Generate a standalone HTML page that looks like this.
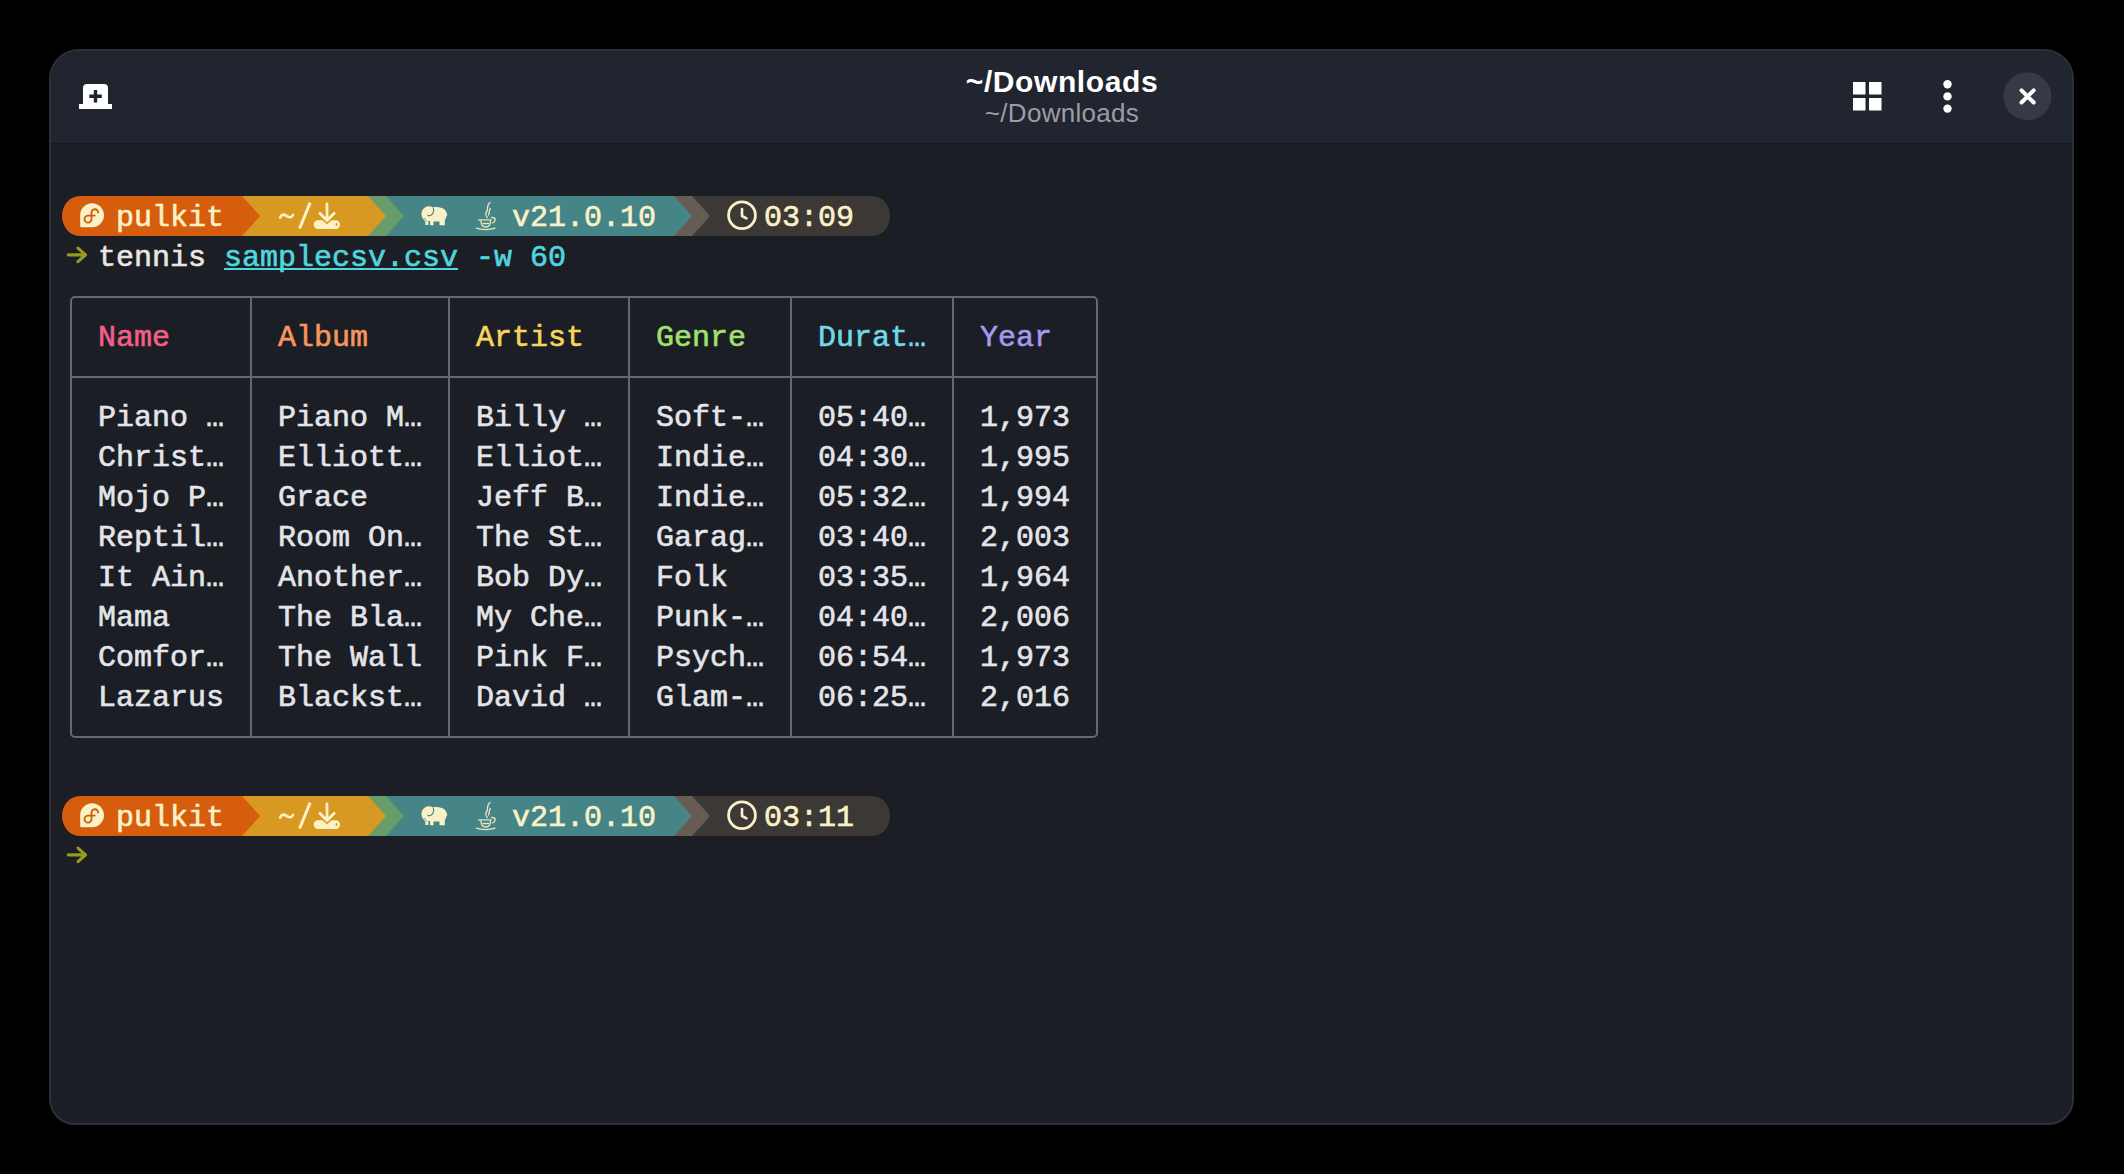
<!DOCTYPE html>
<html><head><meta charset="utf-8">
<style>
html,body{margin:0;padding:0;background:#000;width:2124px;height:1174px;overflow:hidden;}
.win{position:absolute;left:49px;top:49px;width:2021px;height:1072px;border:2px solid #2e3039;border-radius:30px 30px 26px 26px;background:#1b1e25;overflow:hidden;}
.hdr{position:absolute;left:0;top:0;width:2022px;height:92px;background:#21252f;border-bottom:1px solid #17191f;}
.t1{position:absolute;left:0;width:2124px;text-align:center;font-family:"Liberation Sans",sans-serif;}
.term{position:absolute;left:0;top:0;width:2124px;height:1174px;font-family:"Liberation Mono",monospace;font-size:30px;}
.ln{position:absolute;left:62px;height:40px;line-height:40px;white-space:pre;color:#ebe6e2;-webkit-text-stroke:0.6px currentColor;}
.ln .c{position:absolute;top:2px;white-space:pre;}
.dat{color:#e4e5ea;}
.pill{position:absolute;left:62px;}
.arr{position:absolute;left:66px;}
.ico{position:absolute;}
.tbl{position:absolute;left:0;top:0;}
.hi{position:absolute;}
</style></head><body>
<div class="win">
  <div class="hdr"></div>
</div>
<svg class="hi" style="left:79px;top:83px" width="34" height="27" viewBox="0 0 34 27">
<path fill="#fff" d="M8,1 H25 A4,4 0 0 1 29,5 V21 H33 V26 H0 V21 H4 V5 A4,4 0 0 1 8,1 Z"/>
<path fill="none" stroke="#21252f" stroke-width="3.4" d="M16.5,7 V19.5 M10.3,13.2 H22.8"/>
</svg>
<svg class="hi" style="left:1853px;top:82px" width="29" height="29" viewBox="0 0 29 29">
<g fill="#fff"><rect x="0" y="0" width="12.5" height="12.5"/><rect x="16" y="0" width="12.5" height="12.5"/><rect x="0" y="16" width="12.5" height="12.5"/><rect x="16" y="16" width="12.5" height="12.5"/></g>
</svg>
<svg class="hi" style="left:1939px;top:76px" width="18" height="42" viewBox="0 0 18 42">
<g fill="#fff"><circle cx="8.5" cy="8.2" r="4.2"/><circle cx="8.5" cy="20.4" r="4.2"/><circle cx="8.5" cy="32.6" r="4.2"/></g>
</svg>
<svg class="hi" style="left:2003px;top:72px" width="50" height="50" viewBox="0 0 50 50">
<circle cx="24.4" cy="24.2" r="24" fill="#363a45"/>
<path stroke="#fff" stroke-width="4" stroke-linecap="round" d="M18.5,18.3 L30.7,30.5 M30.7,18.3 L18.5,30.5"/>
</svg>
<div class="t1" style="top:65px;font-size:30px;letter-spacing:0.6px;font-weight:bold;color:#fff;">~/Downloads</div>
<div class="t1" style="top:98px;font-size:26px;letter-spacing:0.3px;color:#9b9da4;">~/Downloads</div>

<div class="term">

<svg class="pill" style="top:196px" width="830" height="40" viewBox="0 0 830 40">
<path fill="#3c3836" d="M630,0 H810 A18,20 0 0 1 810,40 H630 Z"/>
<path fill="#665c54" d="M612,0 H630 L648,20 L630,40 H612 Z"/>
<path fill="#458588" d="M306,0 H612 L630,20 L612,40 H306 Z"/>
<path fill="#689d6a" d="M306,0 H324 L342,20 L324,40 H306 Z"/>
<path fill="#d79921" d="M180,0 H306 L324,20 L306,40 H180 Z"/>
<path fill="#d65d0e" d="M18,0 H180 L198,20 L180,40 H18 A18,20 0 0 1 18,0 Z"/>
</svg>
<div class="ln" style="top:196px;color:#fbf1c7"><span class="c" style="left:54px">pulkit</span><span class="c" style="left:450px">v21.0.10</span><span class="c" style="left:702px">03:09</span></div>

<svg class="ico" style="left:276px;top:200px" width="40" height="32" viewBox="0 0 40 32">
<path fill="none" stroke="#fbf1c7" stroke-width="2.7" stroke-linecap="round" d="M4.2,17.6 C5.2,14.6 7.6,14 10,15.6 C12.4,17.2 15.2,18.6 17,15"/>
<path fill="none" stroke="#fbf1c7" stroke-width="3" d="M23.6,28.5 L34.2,2.6"/>
</svg><svg class="ico" style="left:80px;top:203px" width="24" height="25" viewBox="0 0 24 25">
<path fill="#fbf1c7" d="M12,0.2 A12,12 0 1 1 12,24.3 H1.5 A1.3,1.3 0 0 1 0.2,23 V12.2 A12,12 0 0 1 12,0.2 Z"/>
<path fill="none" stroke="#d65d0e" stroke-width="1.9" stroke-linecap="round" d="M14.8,12.6 H8 A3.5,3.5 0 1 0 11.5,16.1 V9.5 A3.3,3.3 0 0 1 18.1,9.5"/>
</svg><svg class="ico" style="left:313px;top:201px" width="28" height="28" viewBox="0 0 28 28">
<path fill="none" stroke="#fbf1c7" stroke-width="2.8" stroke-linecap="round" stroke-linejoin="round" d="M14,2.8 V18.5 M6.8,12.3 L14,19.5 L21.2,12.3"/>
<path fill="#fbf1c7" d="M5,19.2 H9.2 L14,23.2 L18.8,19.2 H22.7 A4.35,4.35 0 0 1 22.7,27.9 H5 A4.35,4.35 0 0 1 5,19.2 Z"/>
<ellipse cx="23.5" cy="23.5" rx="0.9" ry="1.4" fill="#d79921"/>
</svg><svg class="ico" style="left:421px;top:206px" width="27" height="20" viewBox="0 0 27 20">
<path fill="#fbf1c7" d="M4,1.5 C6,0 9,0 11,1 C15,0.8 20,1 23,3 C25,4.5 25.5,6.5 25.8,8 L26.5,8.8 L25.5,10 C25,12 24,13.5 23.8,15 L23.8,19.3 L18.5,19.3 L18.5,15.5 L12.5,15.5 L12.5,19.3 L9,19.3 L9,15 C8.3,14.5 7.8,14.8 7.5,15.3 L7.2,19 L4.5,19 C4.2,17 4.8,15.5 3.2,14 C1.5,12.5 0.5,11 0.5,8 C0.5,5 1.5,3 4,1.5 Z"/>
<path fill="none" stroke="#458588" stroke-width="1.1" d="M12.3,1.3 C13,4 12.5,7.5 10,9.2 C8.5,10 7,9.5 6.5,9"/>
<path fill="none" stroke="#458588" stroke-width="0.9" d="M3,12 C3.5,13 5,13.5 6,15.5"/>
</svg><svg class="ico" style="left:475px;top:201px" width="24" height="30" viewBox="0 0 24 30">
<g fill="none" stroke="#e9e4bd" stroke-width="1.3" stroke-linecap="round">
<path d="M15,1.5 C10.5,5 14,8 11.5,11 C10,13 11,15 12.5,16.5"/>
<path d="M15.5,7.5 C13,9.5 15.5,11 13.5,14"/>
<path d="M3.5,18.8 H16 M6,19.5 C6,24 7.5,26 10.8,26 C14,26 15.5,24 15.5,19.5 M16.5,16.5 C21,16.5 21.5,19.5 17.5,22"/>
<path d="M8,22.5 H13.5"/>
<path d="M1.5,27.2 C6,29 15,29 20,27.2"/>
</g></svg><svg class="ico" style="left:727px;top:200px" width="30" height="31" viewBox="0 0 30 31">
<circle cx="15" cy="15.3" r="13.4" fill="none" stroke="#fbf1c7" stroke-width="2.8"/>
<path fill="none" stroke="#fbf1c7" stroke-width="2.6" stroke-linecap="round" stroke-linejoin="round" d="M15,9 V16 L19.5,18.4"/>
</svg>
<svg class="arr" style="top:244px" width="24" height="22" viewBox="0 0 24 22"><path d="M2.3,10.9 H19 M12,4.1 L19.6,10.9 L12,17.7" fill="none" stroke="#979a1e" stroke-width="3.1" stroke-linecap="round" stroke-linejoin="round"/></svg>
<div class="ln" style="top:236px;"><span class="c" style="left:36px">tennis</span><span class="c" style="left:162px;color:#4fd6df;text-decoration:underline;text-decoration-skip-ink:none;text-underline-offset:2px;text-decoration-thickness:2px">samplecsv.csv</span><span class="c" style="left:414px;color:#4fd6df">-w 60</span></div>
<svg class="tbl" width="2124" height="1174" viewBox="0 0 2124 1174">
<path fill="none" stroke="#626877" stroke-width="2" d="M75,297 H1093 A4,4 0 0 1 1097,301 V733 A4,4 0 0 1 1093,737 H75 A4,4 0 0 1 71,733 V301 A4,4 0 0 1 75,297 Z"/>
<path fill="none" stroke="#626877" stroke-width="2" d="M71,377 H1097 M251,297 V737 M449,297 V737 M629,297 V737 M791,297 V737 M953,297 V737"/>
</svg>
<div class="ln" style="top:316px"><span class="c" style="left:36px;color:#f25f89">Name</span><span class="c" style="left:216px;color:#f6965d">Album</span><span class="c" style="left:414px;color:#f8d55c">Artist</span><span class="c" style="left:594px;color:#a3e06f">Genre</span><span class="c" style="left:756px;color:#72d7e8">Durat…</span><span class="c" style="left:918px;color:#a698f0">Year</span></div><div class="ln dat" style="top:396px"><span class="c" style="left:36px">Piano …</span><span class="c" style="left:216px">Piano M…</span><span class="c" style="left:414px">Billy …</span><span class="c" style="left:594px">Soft-…</span><span class="c" style="left:756px">05:40…</span><span class="c" style="left:918px">1,973</span></div><div class="ln dat" style="top:436px"><span class="c" style="left:36px">Christ…</span><span class="c" style="left:216px">Elliott…</span><span class="c" style="left:414px">Elliot…</span><span class="c" style="left:594px">Indie…</span><span class="c" style="left:756px">04:30…</span><span class="c" style="left:918px">1,995</span></div><div class="ln dat" style="top:476px"><span class="c" style="left:36px">Mojo P…</span><span class="c" style="left:216px">Grace</span><span class="c" style="left:414px">Jeff B…</span><span class="c" style="left:594px">Indie…</span><span class="c" style="left:756px">05:32…</span><span class="c" style="left:918px">1,994</span></div><div class="ln dat" style="top:516px"><span class="c" style="left:36px">Reptil…</span><span class="c" style="left:216px">Room On…</span><span class="c" style="left:414px">The St…</span><span class="c" style="left:594px">Garag…</span><span class="c" style="left:756px">03:40…</span><span class="c" style="left:918px">2,003</span></div><div class="ln dat" style="top:556px"><span class="c" style="left:36px">It Ain…</span><span class="c" style="left:216px">Another…</span><span class="c" style="left:414px">Bob Dy…</span><span class="c" style="left:594px">Folk</span><span class="c" style="left:756px">03:35…</span><span class="c" style="left:918px">1,964</span></div><div class="ln dat" style="top:596px"><span class="c" style="left:36px">Mama</span><span class="c" style="left:216px">The Bla…</span><span class="c" style="left:414px">My Che…</span><span class="c" style="left:594px">Punk-…</span><span class="c" style="left:756px">04:40…</span><span class="c" style="left:918px">2,006</span></div><div class="ln dat" style="top:636px"><span class="c" style="left:36px">Comfor…</span><span class="c" style="left:216px">The Wall</span><span class="c" style="left:414px">Pink F…</span><span class="c" style="left:594px">Psych…</span><span class="c" style="left:756px">06:54…</span><span class="c" style="left:918px">1,973</span></div><div class="ln dat" style="top:676px"><span class="c" style="left:36px">Lazarus</span><span class="c" style="left:216px">Blackst…</span><span class="c" style="left:414px">David …</span><span class="c" style="left:594px">Glam-…</span><span class="c" style="left:756px">06:25…</span><span class="c" style="left:918px">2,016</span></div>

<svg class="pill" style="top:796px" width="830" height="40" viewBox="0 0 830 40">
<path fill="#3c3836" d="M630,0 H810 A18,20 0 0 1 810,40 H630 Z"/>
<path fill="#665c54" d="M612,0 H630 L648,20 L630,40 H612 Z"/>
<path fill="#458588" d="M306,0 H612 L630,20 L612,40 H306 Z"/>
<path fill="#689d6a" d="M306,0 H324 L342,20 L324,40 H306 Z"/>
<path fill="#d79921" d="M180,0 H306 L324,20 L306,40 H180 Z"/>
<path fill="#d65d0e" d="M18,0 H180 L198,20 L180,40 H18 A18,20 0 0 1 18,0 Z"/>
</svg>
<div class="ln" style="top:796px;color:#fbf1c7"><span class="c" style="left:54px">pulkit</span><span class="c" style="left:450px">v21.0.10</span><span class="c" style="left:702px">03:11</span></div>

<svg class="ico" style="left:276px;top:800px" width="40" height="32" viewBox="0 0 40 32">
<path fill="none" stroke="#fbf1c7" stroke-width="2.7" stroke-linecap="round" d="M4.2,17.6 C5.2,14.6 7.6,14 10,15.6 C12.4,17.2 15.2,18.6 17,15"/>
<path fill="none" stroke="#fbf1c7" stroke-width="3" d="M23.6,28.5 L34.2,2.6"/>
</svg><svg class="ico" style="left:80px;top:803px" width="24" height="25" viewBox="0 0 24 25">
<path fill="#fbf1c7" d="M12,0.2 A12,12 0 1 1 12,24.3 H1.5 A1.3,1.3 0 0 1 0.2,23 V12.2 A12,12 0 0 1 12,0.2 Z"/>
<path fill="none" stroke="#d65d0e" stroke-width="1.9" stroke-linecap="round" d="M14.8,12.6 H8 A3.5,3.5 0 1 0 11.5,16.1 V9.5 A3.3,3.3 0 0 1 18.1,9.5"/>
</svg><svg class="ico" style="left:313px;top:801px" width="28" height="28" viewBox="0 0 28 28">
<path fill="none" stroke="#fbf1c7" stroke-width="2.8" stroke-linecap="round" stroke-linejoin="round" d="M14,2.8 V18.5 M6.8,12.3 L14,19.5 L21.2,12.3"/>
<path fill="#fbf1c7" d="M5,19.2 H9.2 L14,23.2 L18.8,19.2 H22.7 A4.35,4.35 0 0 1 22.7,27.9 H5 A4.35,4.35 0 0 1 5,19.2 Z"/>
<ellipse cx="23.5" cy="23.5" rx="0.9" ry="1.4" fill="#d79921"/>
</svg><svg class="ico" style="left:421px;top:806px" width="27" height="20" viewBox="0 0 27 20">
<path fill="#fbf1c7" d="M4,1.5 C6,0 9,0 11,1 C15,0.8 20,1 23,3 C25,4.5 25.5,6.5 25.8,8 L26.5,8.8 L25.5,10 C25,12 24,13.5 23.8,15 L23.8,19.3 L18.5,19.3 L18.5,15.5 L12.5,15.5 L12.5,19.3 L9,19.3 L9,15 C8.3,14.5 7.8,14.8 7.5,15.3 L7.2,19 L4.5,19 C4.2,17 4.8,15.5 3.2,14 C1.5,12.5 0.5,11 0.5,8 C0.5,5 1.5,3 4,1.5 Z"/>
<path fill="none" stroke="#458588" stroke-width="1.1" d="M12.3,1.3 C13,4 12.5,7.5 10,9.2 C8.5,10 7,9.5 6.5,9"/>
<path fill="none" stroke="#458588" stroke-width="0.9" d="M3,12 C3.5,13 5,13.5 6,15.5"/>
</svg><svg class="ico" style="left:475px;top:801px" width="24" height="30" viewBox="0 0 24 30">
<g fill="none" stroke="#e9e4bd" stroke-width="1.3" stroke-linecap="round">
<path d="M15,1.5 C10.5,5 14,8 11.5,11 C10,13 11,15 12.5,16.5"/>
<path d="M15.5,7.5 C13,9.5 15.5,11 13.5,14"/>
<path d="M3.5,18.8 H16 M6,19.5 C6,24 7.5,26 10.8,26 C14,26 15.5,24 15.5,19.5 M16.5,16.5 C21,16.5 21.5,19.5 17.5,22"/>
<path d="M8,22.5 H13.5"/>
<path d="M1.5,27.2 C6,29 15,29 20,27.2"/>
</g></svg><svg class="ico" style="left:727px;top:800px" width="30" height="31" viewBox="0 0 30 31">
<circle cx="15" cy="15.3" r="13.4" fill="none" stroke="#fbf1c7" stroke-width="2.8"/>
<path fill="none" stroke="#fbf1c7" stroke-width="2.6" stroke-linecap="round" stroke-linejoin="round" d="M15,9 V16 L19.5,18.4"/>
</svg>
<svg class="arr" style="top:844px" width="24" height="22" viewBox="0 0 24 22"><path d="M2.3,10.9 H19 M12,4.1 L19.6,10.9 L12,17.7" fill="none" stroke="#979a1e" stroke-width="3.1" stroke-linecap="round" stroke-linejoin="round"/></svg>
</div>
</body></html>
